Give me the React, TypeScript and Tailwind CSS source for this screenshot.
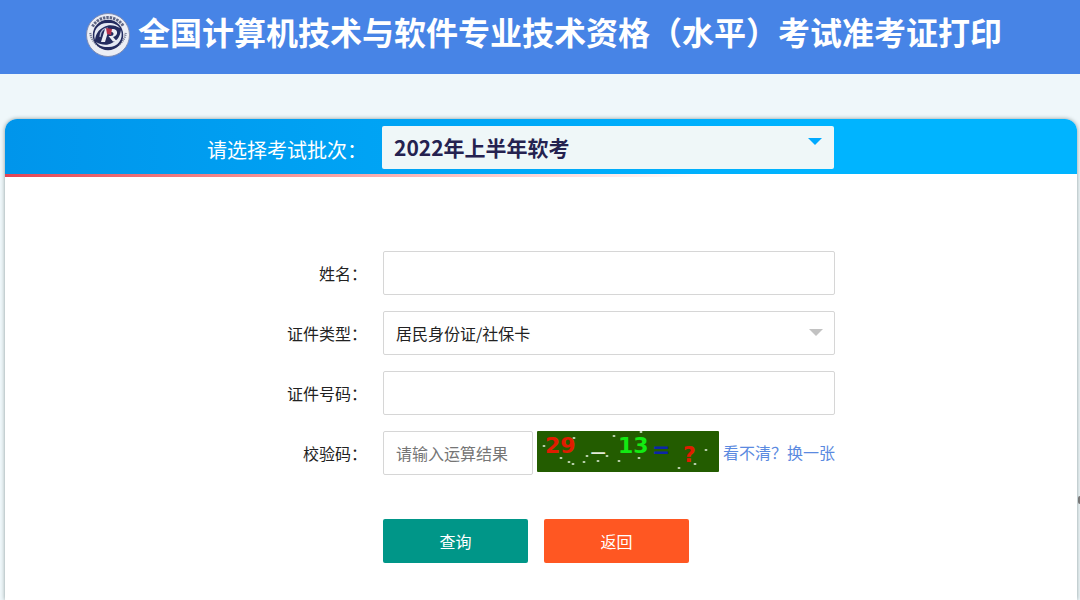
import { useState } from 'react';
import type { ReactNode } from 'react';

const batches = ['2022年上半年软考'];

const idTypes = ['居民身份证/社保卡'];

const specks = [
  [7, 15], [37, 7], [24, 27], [32, 31], [36, 33], [47, 31], [50, 25], [61, 30],
  [70, 25], [77, 5], [82, 30], [102, 27], [142, 37], [158, 33], [169, 19], [104, 1],
];

const fieldClass =
  'h-11 w-full min-w-0 rounded-xs border border-[#d6d6d6] bg-white px-3 text-base text-[#222] outline-none placeholder:text-[#757575] focus:border-gray-400';

function Logo() {
  return (
    <svg className="size-11 shrink-0" viewBox="0 0 44 44" aria-hidden="true">
      <circle cx="22" cy="22" r="21.5" fill="#eceef5" stroke="#7f8cb3" />
      {/* lettering band: characters above, latin below */}
      <path d="M6.5 13.5a17.8 17.8 0 0 1 31 0" fill="none" stroke="#3c4468" strokeWidth="3" strokeDasharray="2.4 1" opacity="0.8" />
      <path d="M4.2 20a18 18 0 0 0 35.6 0" fill="none" stroke="#4a5172" strokeWidth="2.2" strokeDasharray="1.2 0.8" opacity="0.75" />
      <circle cx="22" cy="22" r="15.2" fill="#232b5e" />
      {/* swirls */}
      <path d="M9 27C6 17 13 9 23 10c5 0 9 2 11 5-5-3-11-4-16-1-6 3-8 7-9 13z" fill="#e4e8f3" />
      <path d="M35 17c3 10-4 18-14 17-5 0-9-2-11-5 5 3 11 4 16 1 6-3 8-7 9-13z" fill="#e4e8f3" />
      <path d="M14 24c0-6 4-9 8-9" fill="none" stroke="#aeb7d2" strokeWidth="1.2" />
      {/* monogram */}
      <path d="M19 16h7c4 0 5.500 2 5 4.500-.5 2-2 3-4 3.500l4 4.500h-4l-4.500-5.500h2c2 0 3-1 3-2.300 0-1.200-1-1.700-2.500-1.700h-3L19 29h-4z" fill="#eceef5" />
      <path d="M20 15l6 1-1 6-4-1z" fill="#b5304b" />
    </svg>
  );
}

function Captcha() {
  return (
    <svg className="h-[41px] w-[182px] shrink-0" viewBox="0 0 182 41" role="img" aria-label="29 − 13 = ?">
      <rect width="182" height="41" rx="1" fill="#235c00" />
      {specks.map(([x, y]) => (
        <ellipse key={`${x}-${y}`} cx={x} cy={y} rx="1.5" ry="1" fill="#c9dcbd" />
      ))}
      <g fontFamily="'DejaVu Sans', sans-serif" fontSize="22" fontWeight="bold">
        <text x="8" y="22" fill="#e01c00">29</text>
        <text x="52" y="29" fontWeight="normal" fill="#e4ead9">−</text>
        <text x="81" y="22" fill="#12ea12">13</text>
        <text x="115" y="26" fill="#0b25a8">=</text>
        <text x="146" y="31" fill="#e01c00">?</text>
      </g>
    </svg>
  );
}

function Arrow({ className }: { className: string }) {
  return (
    <span
      className={`pointer-events-none absolute border-x-[7px] border-t-[7px] border-x-transparent ${className}`}
    />
  );
}

function FormRow({ id, label, children }: { id: string; label: string; children: ReactNode }) {
  return (
    <div className="flex items-center gap-4">
      <label htmlFor={id} className="w-[120px] shrink-0 text-right">
        {label}
      </label>
      <div className="min-w-0 flex-1">{children}</div>
    </div>
  );
}

export default function App() {
  const [batch, setBatch] = useState(batches[0]);
  const [idType, setIdType] = useState(idTypes[0]);

  return (
    <div className="relative flex min-h-screen flex-col bg-[#eff7fa] font-['Noto_Sans_CJK_SC',sans-serif] text-base text-[#222]">
      {/* Page header */}
      <header className="flex min-h-[74px] items-center justify-center gap-2 bg-[#4784e6] pb-1 pl-2">
        <Logo />
        <h1 className="pb-2 text-[32px] leading-10 font-bold text-white">
          全国计算机技术与软件专业技术资格（水平）考试准考证打印
        </h1>
      </header>

      <main className="mt-[45px] mr-[3px] ml-[5px] flex flex-1 flex-col rounded-t-xl bg-white shadow-[0_0_4px_#8a9a9a]">
        {/* Exam batch */}
        <div className="rounded-t-xl bg-linear-to-r from-[#0095eb] to-[#00b4ff] to-75%">
          <div className="mx-auto flex h-[55px] max-w-[668px] items-center gap-[15px] pt-1 pr-[41px] pb-0.5">
            <label htmlFor="batch" className="w-40 shrink-0 pt-1 text-xl text-white">
              请选择考试批次：
            </label>
            <div className="relative flex-1">
              <select
                id="batch"
                value={batch}
                onChange={(e) => setBatch(e.target.value)}
                className="h-[43px] w-full appearance-none rounded-xs bg-[#eff7f8] px-3 text-[21px] font-bold text-[#252250] outline-none"
              >
                {batches.map((item) => (
                  <option key={item}>{item}</option>
                ))}
              </select>
              <Arrow className="top-3 right-3 border-t-[#00aaff]" />
            </div>
          </div>
        </div>
        <div className="h-[3px] bg-linear-to-r from-[#e24455] to-white to-65%" />

        {/* Query form */}
        <form
          className="mx-auto flex w-full max-w-[588px] flex-col gap-4 pt-[74px] pb-9"
          onSubmit={(e) => e.preventDefault()}
        >
          <FormRow id="name" label="姓名：">
            <input id="name" type="text" className={fieldClass} />
          </FormRow>
          <FormRow id="id-type" label="证件类型：">
            <div className="relative">
              <select
                id="id-type"
                value={idType}
                onChange={(e) => setIdType(e.target.value)}
                className={`${fieldClass} appearance-none`}
              >
                {idTypes.map((item) => (
                  <option key={item}>{item}</option>
                ))}
              </select>
              <Arrow className="top-[18px] right-3 border-t-[#c2c2c2]" />
            </div>
          </FormRow>
          <FormRow id="id-number" label="证件号码：">
            <input id="id-number" type="text" className={fieldClass} />
          </FormRow>
          <FormRow id="code" label="校验码：">
            <div className="flex gap-1">
              <input id="code" type="text" placeholder="请输入运算结果" className={fieldClass} />
              <Captcha />
              <a href="#" className="shrink-0 leading-[42px] text-[#5b8ae0]">
                看不清？换一张
              </a>
            </div>
          </FormRow>

          <div className="mt-7 ml-[136px] flex gap-4">
            <button type="submit" className="h-11 w-[145px] rounded-xs bg-[#009688] text-white">
              查询
            </button>
            <button type="button" className="h-11 w-[145px] rounded-xs bg-[#ff5722] text-white">
              返回
            </button>
          </div>
        </form>
      </main>

      {/* Side handle */}
      <span className="absolute top-[496px] right-0 h-2 w-0.5 rounded-l-full bg-[#777]" />
    </div>
  );
}
